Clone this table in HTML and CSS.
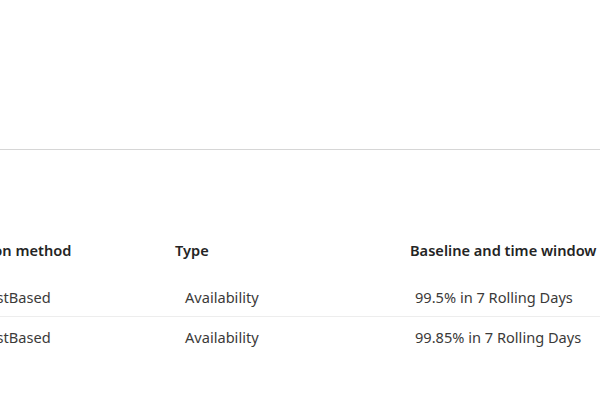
FILE: index.html
```html
<!DOCTYPE html>
<html lang="en">
<head>
    <meta charset="UTF-8">
    <title>Service level objectives</title>
    <link rel="stylesheet" href="styles.css">
</head>
<body>
    <div class="top-area"></div>
    <div class="content">
        <div class="slo-table">
            <div class="slo-row slo-head">
                <div class="cell">Calculation method</div>
                <div class="cell">Type</div>
                <div class="cell">Baseline and time window</div>
            </div>
            <div class="slo-row">
                <div class="cell method">RequestBased</div>
                <div class="cell">Availability</div>
                <div class="cell baseline">99.5% in 7 Rolling Days</div>
            </div>
            <div class="slo-row">
                <div class="cell method">RequestBased</div>
                <div class="cell">Availability</div>
                <div class="cell baseline">99.85% in 7 Rolling Days</div>
            </div>
        </div>
    </div>
</body>
</html>
```

FILE: styles.css
```css
body {
    margin: 0;
    font-family: 'Noto Sans', 'Open Sans', sans-serif;
    background-color: #fff;
    color: #3b3a39;
    overflow: hidden;
}
.top-area {
    height: 149px;
    border-bottom: 1px solid #d6d6d6;
}
.content {
    padding-top: 80px;
    overflow: hidden;
}
.slo-table {
    margin-left: -68px;
    width: 700px;
}
.slo-row {
    display: grid;
    grid-template-columns: 243px 235px 1fr;
    align-items: center;
    height: 39px;
    font-size: 14.6px;
}
.slo-row + .slo-row {
    border-top: 1px solid #ededed;
}
.slo-head {
    height: 40px;
    margin-bottom: 7px;
    font-weight: 600;
    color: #242424;
}
.slo-head + .slo-row {
    border-top: none;
}
.slo-row .cell {
    padding-left: 10px;
}
.slo-row .method {
    padding-left: 21px;
}
.slo-row .baseline {
    padding-left: 5px;
}
.slo-head .cell {
    padding-left: 0;
}
```
